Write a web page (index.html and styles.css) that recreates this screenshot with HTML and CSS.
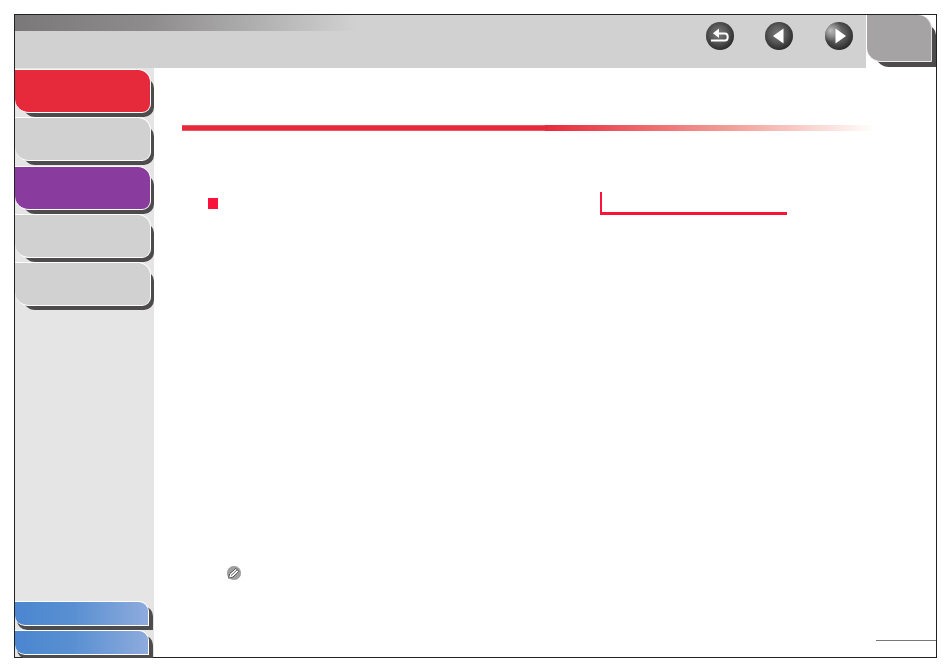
FILE: index.html
```html
<!DOCTYPE html>
<html>
<head>
  <meta charset="UTF-8">
  <title>Manual Page</title>
  <link rel="stylesheet" href="styles.css">
</head>
<body>
  <svg class="defs" width="0" height="0">
    <defs>
      <radialGradient id="ball" cx="0.45" cy="0.42" r="0.58">
        <stop offset="0" stop-color="#7c7c7c"/>
        <stop offset="0.55" stop-color="#565656"/>
        <stop offset="1" stop-color="#2b2b2b"/>
      </radialGradient>
      <radialGradient id="glow" cx="0.2" cy="0.3" r="0.4">
        <stop offset="0" stop-color="#c8c8c8" stop-opacity="0.9"/>
        <stop offset="1" stop-color="#c8c8c8" stop-opacity="0"/>
      </radialGradient>
    </defs>
  </svg>
  <div class="frame">
    <header class="top">
      <div class="top-main">
        <div class="top-strip"></div>
        <div class="arrows">
          <svg class="arrow" viewBox="0 0 28 28">
            <circle cx="14" cy="14" r="14" fill="url(#ball)"/>
            <path d="M5 18.5h14c3.6 0 3.6-7 0-7H12" fill="none" stroke="#fff" stroke-width="2"/>
            <path d="M13 6.5v9.5l-6-4.7z" fill="#fff"/>
          </svg>
          <svg class="arrow" viewBox="0 0 28 28">
            <circle cx="14" cy="14" r="14" fill="url(#ball)"/>
            <path d="M8 14l10.5-7.5v15z" fill="#fff"/>
          </svg>
          <svg class="arrow" viewBox="0 0 28 28">
            <circle cx="14" cy="14" r="14" fill="url(#ball)"/>
            <circle cx="14" cy="14" r="14" fill="url(#glow)"/>
            <path d="M21 14l-10.5 7.5v-15z" fill="#fff"/>
          </svg>
        </div>
      </div>
      <div class="tab"></div>
    </header>
    <div class="content">
      <nav class="side">
        <div class="side-top">
          <div class="side-btn red"></div>
          <div class="side-btn"></div>
          <div class="side-btn purple"></div>
          <div class="side-btn"></div>
          <div class="side-btn"></div>
        </div>
        <div class="side-bottom">
          <div class="blue-btn"></div>
          <div class="blue-btn"></div>
        </div>
      </nav>
      <main class="page">
        <div class="rule">
          <div class="rule-solid"></div>
          <div class="rule-fade"></div>
        </div>
        <div class="columns">
          <div class="col-left">
            <div class="square"></div>
            <svg class="note" viewBox="0 0 14 14">
              <circle cx="7" cy="7" r="6.8" fill="#a0a0a0" stroke="#777" stroke-width=".4"/>
              <path d="M1.6 12.2l1.2-4.4 6-5.4 3 3-5.8 5.6z" fill="#fff" stroke="#333" stroke-width=".8"/>
              <path d="M4 9.6l6.2-5.8" stroke="#333" stroke-width=".8"/>
            </svg>
          </div>
          <div class="col-right">
            <div class="corner-line"></div>
          </div>
        </div>
        <div class="foot-line"></div>
      </main>
    </div>
  </div>
</body>
</html>
```

FILE: styles.css
```css
body {
  margin: 14px 0 0 14px;
  background: #fff;
}
.defs {
  position: absolute;
}
.frame {
  box-sizing: border-box;
  width: 923px;
  height: 644px;
  border: 1px solid #222;
  display: flex;
  flex-direction: column;
}
.top {
  display: flex;
  height: 53px;
  flex: none;
  isolation: isolate;
}
.top-main {
  width: 851px;
  background: #d1d1d1;
}
.top-strip {
  height: 16px;
  width: 340px;
  background: linear-gradient(to right, #7a7878, #8e8c8c 40%, #d1d1d1);
}
.arrows {
  display: flex;
  gap: 31.5px;
  margin: -9px 0 0 690.5px;
}
.arrow {
  width: 28px;
  height: 28px;
  display: block;
}
.tab {
  position: relative;
  box-sizing: border-box;
  width: 65px;
  height: 47px;
  margin-left: 1px;
  background: #a5a3a3;
  border-right: 1px solid #ddd;
  border-bottom: 1px solid #eee;
  border-radius: 0 14px 0 14px;
}
.tab::before {
  content: "";
  position: absolute;
  top: 10px;
  left: 8px;
  right: -5px;
  bottom: -6px;
  background: #4d4b4b;
  border-radius: 0 10px 0 14px;
  z-index: -1;
}
.content {
  flex: 1;
  display: flex;
  min-height: 0;
}
.side {
  width: 139px;
  flex: none;
  background: #e5e5e5;
  display: flex;
  flex-direction: column;
  justify-content: space-between;
  position: relative;
  z-index: 0;
}
.side-top {
  padding-top: 1px;
  display: flex;
  flex-direction: column;
  gap: 4.3px;
}
.side-btn {
  position: relative;
  box-sizing: border-box;
  width: 136px;
  height: 44px;
  background: #d1d1d1;
  border: 1px solid #fff;
  border-left: 0;
  border-radius: 0 13px 9px 14px;
}
.side-btn::before,
.blue-btn::before {
  content: "";
  position: absolute;
  top: 8px;
  left: 8px;
  right: -4px;
  bottom: -5px;
  background: #4d4b4b;
  border-radius: 0 10px 10px 12px;
  z-index: -1;
}
.side-btn.red {
  background: #e62a3c;
}
.side-btn.purple {
  background: #8a3c9e;
}
.side-bottom {
  display: flex;
  flex-direction: column;
  gap: 4px;
}
.blue-btn {
  position: relative;
  box-sizing: border-box;
  width: 134px;
  height: 25px;
  background: linear-gradient(to right, #4a86cf, #5a90d2 45%, #8eabdd);
  border: 1px solid #fff;
  border-left: 0;
  border-radius: 0 10px 0 10px;
}
.blue-btn::before {
  top: 4px;
  left: 2px;
  right: -5px;
  bottom: -5px;
  border-radius: 0 10px 0 10px;
}
.side-bottom .blue-btn:last-child {
  margin-bottom: 2px;
}
.page {
  flex: 1;
  display: flex;
  flex-direction: column;
  padding-top: 57px;
}
.rule {
  display: flex;
  margin-left: 28px;
  height: 6px;
}
.rule-solid {
  box-sizing: border-box;
  width: 363px;
  background: #e62a3c;
  border-top: 1px solid #ec5866;
  border-bottom: 1px solid #ec5866;
}
.rule-fade {
  width: 330px;
  background: linear-gradient(to right, #e62a3c, #f3a79f 60%, #fff);
}
.columns {
  flex: 1;
  display: flex;
  margin-top: 61px;
}
.col-left {
  width: 446px;
  padding-left: 54px;
  box-sizing: border-box;
}
.square {
  width: 10px;
  height: 11px;
  margin-top: 6px;
  background: #f9123a;
}
.note {
  display: block;
  width: 14px;
  height: 14px;
  margin: 357px 0 0 19px;
}
.corner-line {
  box-sizing: border-box;
  width: 187px;
  height: 23px;
  border-left: 2px solid #f9123a;
  border-bottom: 3px solid #f9123a;
}
.foot-line {
  align-self: flex-end;
  width: 60px;
  height: 1px;
  background: #777;
  margin-bottom: 16px;
}
```
